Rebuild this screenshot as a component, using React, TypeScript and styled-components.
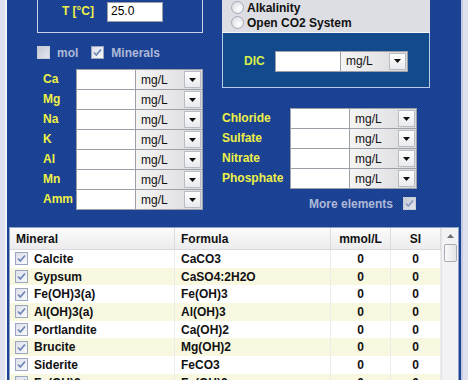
import React from "react";
import styled, { createGlobalStyle } from "styled-components";

const GlobalStyle = createGlobalStyle`
  html, body {
    margin: 0;
    padding: 0;
    background: #e2e5f0;
  }
  body {
    font-family: "Liberation Sans", Arial, sans-serif;
    font-size: 12px;
  }
`;

const Window = styled.div`
  width: 468px;
  height: 380px;
  display: flex;
  overflow: hidden;
`;

const SideStrip = styled.div<{ width: number }>`
  width: ${(p) => p.width}px;
  flex: none;
  background: #dfe2ee;
  box-shadow: inset -2px 0 0 #f4f5fa;
`;

const RightStrip = styled(SideStrip)`
  box-shadow: inset 2px 0 0 #c4cbe0;
`;

const Main = styled.div`
  flex: 1;
  display: flex;
  flex-direction: column;
  background-color: #1b4195;
  background-image: repeating-conic-gradient(#1e4699 0 25%, #183d8e 0 50%);
  background-size: 2px 2px;
`;

const Top = styled.div`
  display: flex;
  gap: 19px;
  padding-left: 30px;
  flex: none;
`;

const LeftCol = styled.div`
  width: 166px;
  display: flex;
  flex-direction: column;
`;

const RightCol = styled.div`
  width: 208px;
  display: flex;
  flex-direction: column;
`;

const TempBox = styled.div`
  height: 33px;
  box-sizing: border-box;
  border: 1px solid #c9d3ea;
  border-top: none;
  display: flex;
  align-items: flex-start;
  padding-top: 2px;
`;

const YellowLabel = styled.span<{ width: number; align?: string }>`
  width: ${(p) => p.width}px;
  flex: none;
  text-align: ${(p) => p.align || "left"};
  color: #eef048;
  font-weight: 700;
  font-size: 12px;
  line-height: 19px;
`;

const TextInput = styled.div<{ width: number; height?: number }>`
  width: ${(p) => p.width}px;
  height: ${(p) => p.height || 21}px;
  box-sizing: border-box;
  flex: none;
  background: #ffffff;
  border: 1px solid #9a9fa8;
  font-size: 12px;
  line-height: 17px;
  padding-left: 3px;
  color: #000;
`;

const SelectBox = styled.div<{ width: number; height?: number }>`
  width: ${(p) => p.width}px;
  height: ${(p) => p.height || 21}px;
  box-sizing: border-box;
  flex: none;
  display: flex;
  align-items: center;
  border: 1px solid #9a9fa8;
  border-left: none;
  background: linear-gradient(to right, #f4f4f4 0%, #e6e6e8 55%, #d8d9dc 100%);
  font-size: 12px;
  color: #111;
  padding-left: 5px;
`;

const SelectText = styled.span`
  flex: 1;
`;

const DropButton = styled.div`
  width: 17px;
  height: 17px;
  margin-right: 1px;
  box-sizing: border-box;
  border: 1px solid #b9bcc2;
  background: linear-gradient(#ffffff, #e9eaee);
  display: flex;
  align-items: center;
  justify-content: center;
`;

const Select = ({ width = 67, height }: { width?: number; height?: number }) => (
  <SelectBox width={width} height={height}>
    <SelectText>mg/L</SelectText>
    <DropButton>
      <svg width="7" height="4" viewBox="0 0 7 4">
        <path d="M0 0 H7 L3.5 4 Z" fill="#111" />
      </svg>
    </DropButton>
  </SelectBox>
);

const CheckRow = styled.div`
  display: flex;
  align-items: center;
  height: 13px;
  margin-top: 13px;
`;

const DimLabel = styled.span<{ gap?: number }>`
  color: #aeb9d8;
  font-weight: 700;
  font-size: 12px;
  margin-left: ${(p) => p.gap ?? 7}px;
  margin-right: 13px;
`;

const CheckSvg = styled.svg`
  flex: none;
  display: block;
`;

const Check = ({ checked, dim }: { checked?: boolean; dim?: boolean }) => (
  <CheckSvg width="13" height="13" viewBox="0 0 13 13">
    <defs>
      <linearGradient id={dim ? "cbd" : "cbw"} x1="0" y1="0" x2="1" y2="1">
        <stop offset="0" stopColor={dim ? "#c4c8d4" : "#dcdfe8"} />
        <stop offset="1" stopColor={dim ? "#e6e8ee" : "#fbfbfd"} />
      </linearGradient>
    </defs>
    <rect x="0.5" y="0.5" width="12" height="12" fill={`url(#${dim ? "cbd" : "cbw"})`} stroke={dim ? "#c9cdd8" : "#9aa6bd"} />
    {checked && (
      <path d="M3 6.5 L5.3 9 L10 3.5" fill="none" stroke={dim ? "#8a9ac0" : "#6f86b8"} strokeWidth="1.8" />
    )}
  </CheckSvg>
);

const FieldList = styled.div<{ top: number; left: number }>`
  display: flex;
  flex-direction: column;
  margin-top: ${(p) => p.top}px;
  padding-left: ${(p) => p.left}px;
`;

const FieldRow = styled.div`
  display: flex;
  align-items: center;
  height: 21px;
  & + & {
    margin-top: -1px;
  }
`;

const RadioPanel = styled.div`
  height: 33px;
  box-sizing: border-box;
  background: #dcdee3;
  display: flex;
  flex-direction: column;
  justify-content: flex-end;
  padding: 0 0 2px 9px;
  border-bottom: 1px solid #f4f6fb;
`;

const RadioRow = styled.div`
  display: flex;
  align-items: center;
  gap: 3px;
  height: 16px;
  font-weight: 700;
  color: #111;
  font-size: 12px;
`;

const RadioCircle = styled.span`
  width: 11px;
  height: 11px;
  border-radius: 50%;
  border: 1px solid #a7aab2;
  background: radial-gradient(circle at 65% 65%, #ffffff, #d6d8de);
`;

const DicPanel = styled.div`
  height: 55px;
  box-sizing: border-box;
  border: 1px solid #b9cbe4;
  border-top: none;
  background-color: #134a8b;
  background-image: repeating-conic-gradient(#154e90 0 25%, #114687 0 50%);
  background-size: 2px 2px;
  display: flex;
  align-items: center;
  padding: 2px 0 0 21px;
`;

const DicLabel = styled(YellowLabel)`
  color: #d9f04c;
`;

const MoreRow = styled.div`
  display: flex;
  justify-content: flex-end;
  align-items: center;
  gap: 10px;
  height: 15px;
  margin-top: 7px;
  padding-right: 14px;
`;

const MoreText = styled.span`
  color: #aeb9d8;
  font-weight: 700;
  font-size: 12px;
`;

const Table = styled.div`
  flex: 1;
  min-height: 0;
  margin: 16px 2px 0 2px;
  background: #fff;
  border: 1px solid #8ea2c6;
  border-bottom: none;
  display: flex;
  overflow: hidden;
`;

const TableBody = styled.div`
  flex: 1;
  display: flex;
  flex-direction: column;
`;

const cols = "165px 156px 60px 50px";

const HeaderRow = styled.div`
  flex: none;
  display: grid;
  grid-template-columns: ${cols};
  height: 21px;
  background: linear-gradient(#fbfbfb, #ececee);
  border-bottom: 1px solid #d9d9dc;
`;

const HeadCell = styled.div<{ center?: boolean }>`
  display: flex;
  align-items: center;
  justify-content: ${(p) => (p.center ? "center" : "flex-start")};
  padding-left: ${(p) => (p.center ? 0 : 6)}px;
  border-right: 1px solid #dcdcde;
  font-weight: 700;
  font-size: 12px;
  color: #111;
`;

const Row = styled.div<{ alt: boolean }>`
  flex: none;
  display: grid;
  grid-template-columns: ${cols};
  height: 17.7px;
  background: ${(p) => (p.alt ? "#f8f8e1" : "#ffffff")};
`;

const Cell = styled.div<{ center?: boolean; pad?: number }>`
  display: flex;
  align-items: center;
  gap: 6px;
  justify-content: ${(p) => (p.center ? "center" : "flex-start")};
  padding-left: ${(p) => p.pad ?? 0}px;
  border-right: 1px solid #ececea;
  font-weight: 700;
  font-size: 12px;
  color: #111;
  white-space: nowrap;
`;

const ScrollBar = styled.div`
  width: 16px;
  flex: none;
  background: #f2f2f5;
  border-left: 1px solid #e4e4e8;
  display: flex;
  flex-direction: column;
  align-items: center;
`;

const ScrollArrow = styled.div`
  height: 15px;
  display: flex;
  align-items: center;
`;

const ScrollThumb = styled.div`
  width: 13px;
  height: 18px;
  box-sizing: border-box;
  border: 1px solid #a9acb4;
  border-radius: 2px;
  background: linear-gradient(to right, #fafafa, #e3e4e8);
  margin-top: 1px;
`;

const leftElements = ["Ca", "Mg", "Na", "K", "Al", "Mn", "Amm"];
const rightElements = ["Chloride", "Sulfate", "Nitrate", "Phosphate"];

const minerals = [
  ["Calcite", "CaCO3"],
  ["Gypsum", "CaSO4:2H2O"],
  ["Fe(OH)3(a)", "Fe(OH)3"],
  ["Al(OH)3(a)", "Al(OH)3"],
  ["Portlandite", "Ca(OH)2"],
  ["Brucite", "Mg(OH)2"],
  ["Siderite", "FeCO3"],
  ["Fe(OH)2", "Fe(OH)2"],
];

export default function App() {
  return (
    <>
      <GlobalStyle />
      <Window>
        <SideStrip width={7} />
        <Main>
          <Top>
            <LeftCol>
              <TempBox>
                <YellowLabel width={56} align="right">T [°C]</YellowLabel>
                <TextInput width={56} height={20} style={{ marginLeft: 13 }}>25.0</TextInput>
              </TempBox>
              <CheckRow>
                <Check dim />
                <DimLabel>mol</DimLabel>
                <Check checked />
                <DimLabel>Minerals</DimLabel>
              </CheckRow>
              <FieldList top={10} left={6}>
                {leftElements.map((el) => (
                  <FieldRow key={el}>
                    <YellowLabel width={33}>{el}</YellowLabel>
                    <TextInput width={60} />
                    <Select />
                  </FieldRow>
                ))}
              </FieldList>
            </LeftCol>
            <RightCol>
              <RadioPanel>
                <RadioRow>
                  <RadioCircle />
                  Alkalinity
                </RadioRow>
                <RadioRow>
                  <RadioCircle />
                  Open CO2 System
                </RadioRow>
              </RadioPanel>
              <DicPanel>
                <DicLabel width={31}>DIC</DicLabel>
                <TextInput width={66} />
                <Select />
              </DicPanel>
              <FieldList top={20} left={0}>
                {rightElements.map((el) => (
                  <FieldRow key={el}>
                    <YellowLabel width={68}>{el}</YellowLabel>
                    <TextInput width={60} />
                    <Select />
                  </FieldRow>
                ))}
              </FieldList>
              <MoreRow>
                <MoreText>More elements</MoreText>
                <Check checked dim />
              </MoreRow>
            </RightCol>
          </Top>
          <Table>
            <TableBody>
              <HeaderRow>
                <HeadCell>Mineral</HeadCell>
                <HeadCell>Formula</HeadCell>
                <HeadCell center>mmol/L</HeadCell>
                <HeadCell center>SI</HeadCell>
              </HeaderRow>
              {minerals.map(([name, formula], i) => (
                <Row key={name} alt={i % 2 === 1}>
                  <Cell pad={5}>
                    <Check checked />
                    {name}
                  </Cell>
                  <Cell pad={6}>{formula}</Cell>
                  <Cell center>0</Cell>
                  <Cell center>0</Cell>
                </Row>
              ))}
            </TableBody>
            <ScrollBar>
              <ScrollArrow>
                <svg width="7" height="4" viewBox="0 0 7 4">
                  <path d="M0 4 H7 L3.5 0 Z" fill="#6b6f78" />
                </svg>
              </ScrollArrow>
              <ScrollThumb />
            </ScrollBar>
          </Table>
        </Main>
        <RightStrip width={7} />
      </Window>
    </>
  );
}
